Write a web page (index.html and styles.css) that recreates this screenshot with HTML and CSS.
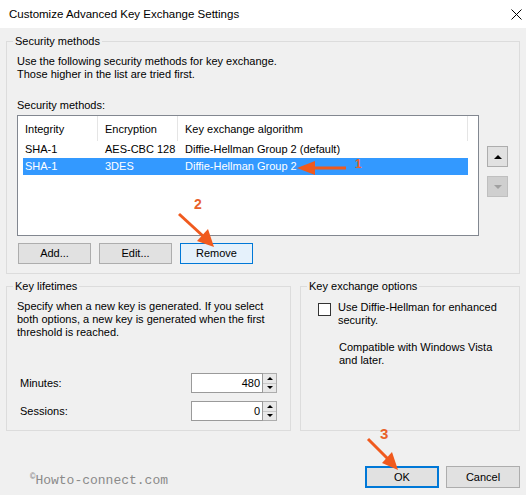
FILE: index.html
```html
<!DOCTYPE html>
<html lang="en">
<head>
    <meta charset="UTF-8">
    <title>Customize Advanced Key Exchange Settings</title>

    <link rel="stylesheet" href="styles.css">
</head>
<body>
    <div class="titlebar">
        <span class="title">Customize Advanced Key Exchange Settings</span>
        <svg class="close" width="11" height="11" viewBox="0 0 11 11">
            <path d="M0.5 0.5 L10.5 10.5 M10.5 0.5 L0.5 10.5" stroke="#000" stroke-width="1"/>
        </svg>
    </div>

    <div class="dialog">
        <!-- 安全方法 -->
        <fieldset class="group">
            <legend>Security methods</legend>
            <div class="group-body methods-body">
                <p class="text">Use the following security methods for key exchange.<br>Those higher in the list are tried first.</p>
                <p class="list-label">Security methods:</p>
                <div class="list-row">
                    <div class="list">
                        <div class="list-head">
                            <span class="col col-1">Integrity</span>
                            <span class="col col-2">Encryption</span>
                            <span class="col col-3">Key exchange algorithm</span>
                        </div>
                        <div class="list-item">
                            <span class="col col-1">SHA-1</span>
                            <span class="col col-2">AES-CBC 128</span>
                            <span class="col col-3">Diffie-Hellman Group 2 (default)</span>
                        </div>
                        <div class="list-item selected">
                            <span class="col col-1">SHA-1</span>
                            <span class="col col-2">3DES</span>
                            <span class="col col-3">Diffie-Hellman Group 2</span>
                        </div>
                    </div>
                    <div class="order-btns">
                        <div class="order-btn"><span class="tri-up"></span></div>
                        <div class="order-btn disabled"><span class="tri-down"></span></div>
                    </div>
                </div>
                <div class="btn-row">
                    <div class="btn">Add...</div>
                    <div class="btn">Edit...</div>
                    <div class="btn hover">Remove</div>
                </div>
            </div>
        </fieldset>

        <div class="lower">
            <!-- 密钥生存期 -->
            <fieldset class="group lifetimes">
                <legend>Key lifetimes</legend>
                <div class="group-body lifetimes-body">
                    <p class="text">Specify when a new key is generated. If you select both options, a new key is generated when the first threshold is reached.</p>
                    <div class="field">
                        <label>Minutes:</label>
                        <div class="spin">
                            <div class="spin-input">480</div>
                            <div class="spin-btns">
                                <span class="spin-btn"><span class="mini-up"></span></span>
                                <span class="spin-btn"><span class="mini-down"></span></span>
                            </div>
                        </div>
                    </div>
                    <div class="field">
                        <label>Sessions:</label>
                        <div class="spin">
                            <div class="spin-input">0</div>
                            <div class="spin-btns">
                                <span class="spin-btn"><span class="mini-up"></span></span>
                                <span class="spin-btn"><span class="mini-down"></span></span>
                            </div>
                        </div>
                    </div>
                </div>
            </fieldset>

            <!-- 密钥交换选项 -->
            <fieldset class="group options">
                <legend>Key exchange options</legend>
                <div class="group-body options-body">
                    <div class="check-row">
                        <span class="checkbox"></span>
                        <span class="text">Use Diffie-Hellman for enhanced<br>security.</span>
                    </div>
                    <p class="text note">Compatible with Windows Vista<br>and later.</p>
                </div>
            </fieldset>
        </div>

        <div class="footer">
            <span class="mark"><sup>©</sup>Howto-connect.com</span>
            <div class="footer-btns">
                <div class="btn default">OK</div>
                <div class="btn">Cancel</div>
            </div>
        </div>
    </div>

    <!-- 标注箭头 -->
    <svg class="notes" width="526" height="495" viewBox="0 0 526 495">
        <g fill="#f05a1e" stroke="#f05a1e">
            <line x1="346" y1="168" x2="312" y2="168" stroke-width="3"/>
            <polygon points="297,168 315,161 315,175" stroke="none"/>
            <line x1="179" y1="214" x2="203" y2="236" stroke-width="3"/>
            <polygon points="214,247 197,241 208,229" stroke="none"/>
            <line x1="368" y1="439" x2="388" y2="459" stroke-width="3"/>
            <polygon points="398,470 382,463 392,452" stroke="none"/>
        </g>
        <g class="note-num" fill="#e8622a">
            <text x="355" y="168" font-size="12" font-weight="bold">1</text>
            <text x="194" y="209" font-size="14" font-weight="bold">2</text>
            <text x="380" y="439" font-size="15" font-weight="bold">3</text>
        </g>
    </svg>
</body>
</html>
```

FILE: styles.css
```css
*{
    margin: 0;
    padding: 0;
    box-sizing: border-box;
}
body{
    width: 526px;
    height: 495px;
    overflow: hidden;
    position: relative;
    background-color: #f0f0f0;
    font-family: "Liberation Sans", Arial, sans-serif;
    font-size: 11px;
    color: #000;
}

/* 标题栏 */
.titlebar{
    height: 28px;
    background-color: #fff;
    display: flex;
    align-items: center;
    justify-content: space-between;
    padding: 0 4px 0 9px;
}
.titlebar .title{
    font-size: 11.5px;
}

.dialog{
    padding: 0 6px 0 6px;
}
.text{
    line-height: 13px;
}

/* 分组框 */
.group{
    border: 1px solid #dcdcdc;
    margin-top: 7px;
}
.group legend{
    margin-left: 6px;
    padding: 0 2px;
    line-height: 13px;
}
.methods-body{
    padding: 7px 0 9px 10px;
}
.list-label{
    margin-top: 18px;
    line-height: 13px;
}

/* 列表 */
.list-row{
    display: flex;
    gap: 8px;
    margin-top: 3px;
}
.list{
    width: 462px;
    height: 121px;
    background-color: #fff;
    border: 1px solid #828790;
    padding-left: 5px;
}
.list-head, .list-item{
    display: flex;
    width: 445px;
}
.list-head{
    height: 25px;
    align-items: center;
}
.list-head .col{
    height: 25px;
    line-height: 27px;
    border-right: 1px solid #e5e5e5;
}
.list-item{
    height: 17px;
    line-height: 17px;
}
.col{
    padding-left: 7px;
}
.col-1{
    width: 75px;
    padding-left: 2px;
}
.col-2{
    width: 80px;
}
.col-3{
    flex: 1;
}
.list-item.selected{
    background-color: #3399ff;
    color: #fff;
}
.order-btns{
    display: flex;
    flex-direction: column;
    gap: 9px;
    padding-top: 31px;
}
.order-btn{
    width: 21px;
    height: 21px;
    background-color: #e1e1e1;
    border: 1px solid #adadad;
    display: flex;
    align-items: center;
    justify-content: center;
}
.order-btn.disabled{
    background-color: #cfcfcf;
    border-color: #bfbfbf;
}
.tri-up{
    border-left: 4px solid transparent;
    border-right: 4px solid transparent;
    border-bottom: 4px solid #000;
}
.tri-down{
    border-left: 4px solid transparent;
    border-right: 4px solid transparent;
    border-top: 4px solid #a0a0a0;
}

/* 按钮 */
.btn-row{
    display: flex;
    gap: 8px;
    margin-top: 7px;
    padding-left: 1px;
}
.btn{
    width: 73px;
    height: 21px;
    line-height: 19px;
    text-align: center;
    background-color: #e1e1e1;
    border: 1px solid #adadad;
}
.btn.hover{
    background-color: #e5f1fb;
    border-color: #0078d7;
}
.btn.default{
    border: 2px solid #0078d7;
    line-height: 17px;
}

/* 下半部分 */
.lower{
    display: flex;
    gap: 9px;
    margin-top: 6px;
}
.lower .group{
    margin-top: 0;
    height: 151px;
}
.lifetimes{
    width: 285px;
}
.options{
    width: 220px;
}
.lifetimes-body{
    padding: 7px 13px 0 10px;
}
.field{
    display: flex;
    align-items: center;
    justify-content: space-between;
    padding-left: 3px;
}
.field:first-of-type{
    margin-top: 34px;
}
.field + .field{
    margin-top: 8px;
}
.spin{
    display: flex;
}
.spin-input{
    width: 72px;
    height: 20px;
    line-height: 18px;
    background-color: #fff;
    border: 1px solid #9a9a9a;
    text-align: right;
    padding-right: 2px;
}
.spin-btns{
    display: flex;
    flex-direction: column;
    width: 14px;
    height: 20px;
    border: 1px solid #adadad;
    border-left: none;
    background-color: #e8e8e8;
}
.spin-btn{
    flex: 1;
    display: flex;
    align-items: center;
    justify-content: center;
}
.spin-btn + .spin-btn{
    border-top: 1px solid #c8c8c8;
}
.mini-up{
    border-left: 3px solid transparent;
    border-right: 3px solid transparent;
    border-bottom: 3px solid #000;
}
.mini-down{
    border-left: 3px solid transparent;
    border-right: 3px solid transparent;
    border-top: 3px solid #000;
}

.options-body{
    padding: 8px 0 0 17px;
}
.check-row{
    display: flex;
    gap: 7px;
}
.checkbox{
    width: 13px;
    height: 13px;
    margin-top: 2px;
    background-color: #fff;
    border: 1px solid #333;
}
.note{
    margin-top: 14px;
    padding-left: 21px;
}

/* 底部 */
.footer{
    display: flex;
    justify-content: space-between;
    margin-top: 35px;
}
.mark{
    font-family: "Liberation Mono", "Courier New", monospace;
    font-size: 13px;
    color: #8a8a8a;
    padding-left: 24px;
    margin-top: 6px;
}
.mark sup{
    font-size: 9px;
}
.footer-btns{
    display: flex;
    gap: 7px;
}
.footer-btns .btn{
    width: 74px;
    height: 22px;
    line-height: 20px;
}
.footer-btns .btn.default{
    line-height: 18px;
}

/* 标注层 */
.notes{
    position: absolute;
    top: 0;
    left: 0;
    pointer-events: none;
}
.note-num text{
    font-family: "Liberation Sans", Arial, sans-serif;
}
```
